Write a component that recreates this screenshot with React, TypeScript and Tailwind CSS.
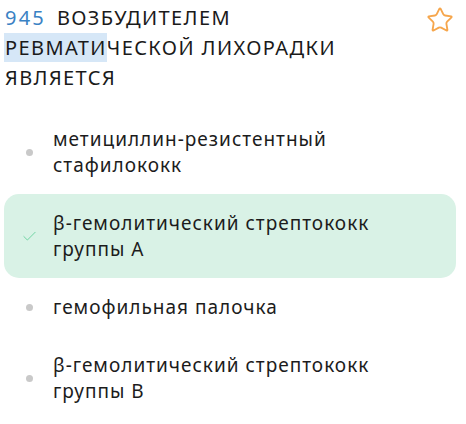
import React from "react";
import { Star, Check } from "lucide-react";

const font = { fontFamily: "'Noto Sans', sans-serif" };

function Option({ lines, correct }: { lines: string[]; correct?: boolean }) {
  return (
    <div
      className={
        "flex items-center rounded-[15px] py-4 pl-[15px] pr-4 " +
        (correct ? "bg-[#d9f2e6]" : "")
      }
    >
      <div className="flex w-[20px] shrink-0 items-center justify-center">
        {correct ? (
          <Check size={17} strokeWidth={1.4} color="#6fd3a2" />
        ) : (
          <div className="h-[7px] w-[7px] rounded-full bg-[#c9c9c9]" />
        )}
      </div>
      <div className="ml-[14px] text-[19px] leading-[26px] tracking-[1px] text-[#1c1c1c]">
        {lines.map((l, i) => (
          <div key={i}>{l}</div>
        ))}
      </div>
    </div>
  );
}

export default function App() {
  return (
    <div className="h-[424px] w-[466px] bg-white" style={font}>
      <div className="flex items-start justify-between pl-[5px] pr-[12px] pt-[3px]">
        <div className="text-[20px] leading-[30px] tracking-[1.4px] text-[#1a1a1a]">
          <div>
            <span className="tracking-[2.2px] text-[#3a82c4]">945</span>
            <span className="ml-[11px]">ВОЗБУДИТЕЛЕМ</span>
          </div>
          <div>
            <span className="-ml-[1px] bg-[#d6e7f7] py-[1px] pl-[1px]">РЕВМАТИ</span>ЧЕСКОЙ ЛИХОРАДКИ
          </div>
          <div>ЯВЛЯЕТСЯ</div>
        </div>
        <Star size={28} strokeWidth={1.6} color="#f6a64c" className="mt-[3px]" />
      </div>
      <div className="mt-[17px] flex flex-col px-[4px] pr-[10px]">
        <Option lines={["метициллин-резистентный", "стафилококк"]} />
        <Option lines={["β-гемолитический стрептококк", "группы А"]} correct />
        <Option lines={["гемофильная палочка"]} />
        <Option lines={["β-гемолитический стрептококк", "группы В"]} />
      </div>
    </div>
  );
}
